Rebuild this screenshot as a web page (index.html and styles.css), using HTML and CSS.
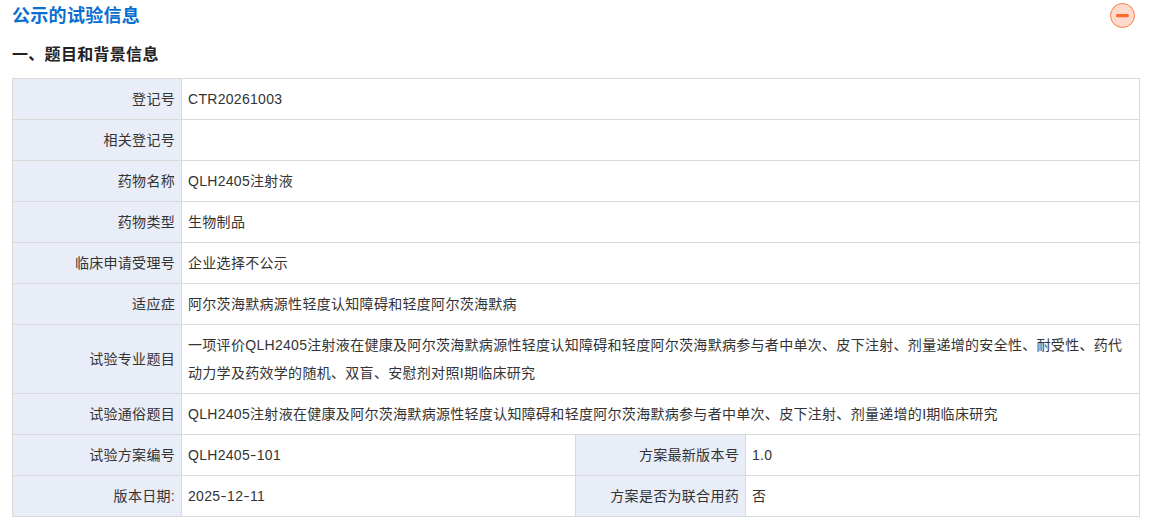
FILE: index.html
```html
<!DOCTYPE html>
<html lang="zh-CN">
<head>
<meta charset="utf-8">
<title>公示的试验信息</title>
<link rel="stylesheet" href="styles.css">
</head>
<body>
<header class="title-bar">
  <h2 class="title">公示的试验信息</h2>
  <button class="toggle" type="button" aria-label="收起">
    <svg viewBox="0 0 26 26" width="26" height="26"><circle cx="12.5" cy="12.5" r="12" fill="#ffd9cc" stroke="#ff7a45" stroke-width="1"/><rect x="6" y="11" width="12.8" height="3.3" rx="1.2" fill="#ff6a2b"/></svg>
  </button>
</header>
<h3 class="section">一、题目和背景信息</h3>
<table class="info">
  <colgroup><col class="c1"><col class="c2"><col class="c3"><col></colgroup>
  <tbody>
    <tr><th>登记号</th><td colspan="3">CTR20261003</td></tr>
    <tr><th>相关登记号</th><td colspan="3"></td></tr>
    <tr><th>药物名称</th><td colspan="3">QLH2405注射液</td></tr>
    <tr><th>药物类型</th><td colspan="3">生物制品</td></tr>
    <tr><th>临床申请受理号</th><td colspan="3">企业选择不公示</td></tr>
    <tr><th>适应症</th><td colspan="3">阿尔茨海默病源性轻度认知障碍和轻度阿尔茨海默病</td></tr>
    <tr><th>试验专业题目</th><td colspan="3">一项评价QLH2405注射液在健康及阿尔茨海默病源性轻度认知障碍和轻度阿尔茨海默病参与者中单次、皮下注射、剂量递增的安全性、耐受性、药代动力学及药效学的随机、双盲、安慰剂对照I期临床研究</td></tr>
    <tr><th>试验通俗题目</th><td colspan="3">QLH2405注射液在健康及阿尔茨海默病源性轻度认知障碍和轻度阿尔茨海默病参与者中单次、皮下注射、剂量递增的I期临床研究</td></tr>
    <tr><th>试验方案编号</th><td>QLH2405<span class="hy">-</span>101</td><th>方案最新版本号</th><td>1.0</td></tr>
    <tr><th>版本日期:</th><td>2025<span class="hy">-</span>12<span class="hy">-</span>11</td><th>方案是否为联合用药</th><td>否</td></tr>
  </tbody>
</table>
</body>
</html>
```
FILE: styles.css
```css
* { box-sizing: border-box; }
html, body { margin: 0; padding: 0; }
body {
  background: #fff;
  color: #333;
  font-family: "Liberation Sans", "Noto Sans CJK SC", sans-serif;
  font-size: 14px;
  letter-spacing: .3px;
  padding: 3px 10px 0 12px;
}
.title-bar { display: flex; justify-content: space-between; align-items: center; height: 26px; }
.title { margin: 0; font-size: 18px; font-weight: 700; color: #0a6fd0; line-height: 26px; }
.toggle { border: 0; padding: 0; margin-right: 4px; background: none; width: 26px; height: 26px; }
.toggle svg { display: block; }
.section { margin: 15px 0 0; font-size: 16px; font-weight: 700; color: #222; line-height: 22px; }
.info { margin-top: 12px; width: 1128px; border-collapse: collapse; table-layout: fixed; }
.c1 { width: 169px; }
.c2 { width: 394px; }
.c3 { width: 170px; }
.info th, .info td { border: 1px solid #d9d9d9; padding: 6px; line-height: 28px; vertical-align: middle; }
.info th { background: #e9edf7; font-weight: 400; text-align: right; }
.info th:empty, .info td:empty { height: 41px; }
.info td { background: #fff; text-align: left; }
.hy { font-family: "Inter", sans-serif; }
```
